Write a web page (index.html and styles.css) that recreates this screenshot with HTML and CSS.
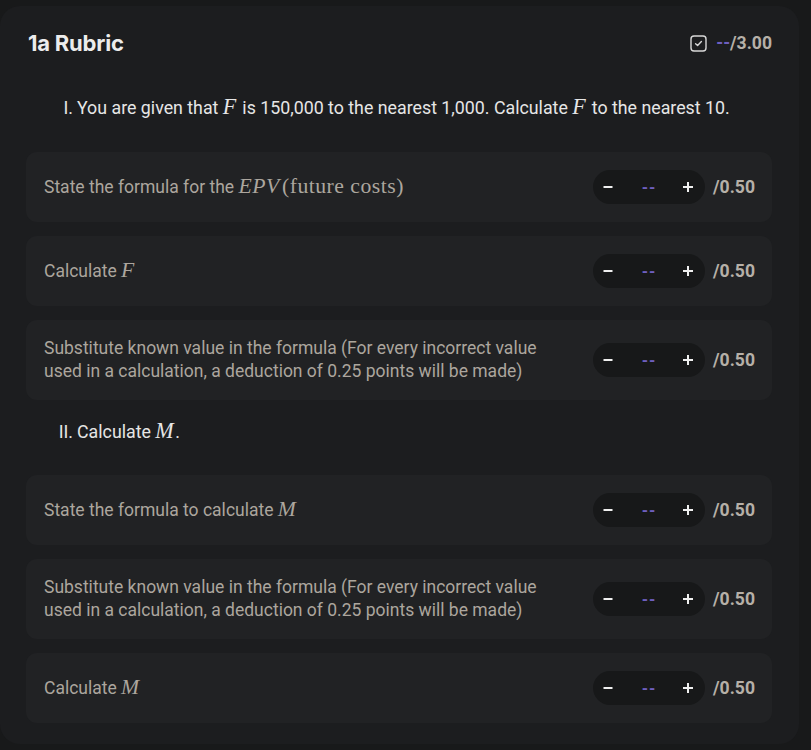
FILE: index.html
```html
<!DOCTYPE html>
<html>
<head>
<meta charset="utf-8">
<link rel="stylesheet" href="styles.css">
</head>
<body>
<div class="card">
  <div class="header">
    <h1 class="title">1a Rubric</h1>
    <div class="total">
      <svg class="check" width="17" height="17" viewBox="0 0 17 17"><rect x="1" y="1" width="15" height="15" rx="3" fill="none" stroke="#d8d8d8" stroke-width="1.4"/><path d="M5.6 8.8 L7.6 10.6 L11.4 6.6" fill="none" stroke="#d8d8d8" stroke-width="1.4" stroke-linecap="round" stroke-linejoin="round"/></svg>
      <span class="dash">--</span><span class="max">/3.00</span>
    </div>
  </div>

  <div class="question q1"><span class="marker">I.</span><span class="qtext">You are given that <span class="mi">F</span> is 150,000 to the nearest 1,000. Calculate <span class="mi">F</span> to the nearest 10.</span></div>

  <div class="items">
    <div class="item">
      <div class="itext">State the formula for the <span class="mi">EPV</span><span class="mr">(future costs)</span></div>
      <div class="score">
        <div class="stepper"><span class="btn"><svg width="12" height="12" viewBox="0 0 12 12"><path d="M1.5 6H10.5" stroke="#f0f0f0" stroke-width="2"/></svg></span><span class="val">--</span><span class="btn"><svg width="12" height="12" viewBox="0 0 12 12"><path d="M1 6H11M6 1V11" stroke="#f0f0f0" stroke-width="2"/></svg></span></div>
        <span class="pts">/0.50</span>
      </div>
    </div>
    <div class="item">
      <div class="itext">Calculate <span class="mi">F</span></div>
      <div class="score">
        <div class="stepper"><span class="btn"><svg width="12" height="12" viewBox="0 0 12 12"><path d="M1.5 6H10.5" stroke="#f0f0f0" stroke-width="2"/></svg></span><span class="val">--</span><span class="btn"><svg width="12" height="12" viewBox="0 0 12 12"><path d="M1 6H11M6 1V11" stroke="#f0f0f0" stroke-width="2"/></svg></span></div>
        <span class="pts">/0.50</span>
      </div>
    </div>
    <div class="item">
      <div class="itext long">Substitute known value in the formula (For every incorrect value used in a calculation, a deduction of 0.25 points will be made)</div>
      <div class="score">
        <div class="stepper"><span class="btn"><svg width="12" height="12" viewBox="0 0 12 12"><path d="M1.5 6H10.5" stroke="#f0f0f0" stroke-width="2"/></svg></span><span class="val">--</span><span class="btn"><svg width="12" height="12" viewBox="0 0 12 12"><path d="M1 6H11M6 1V11" stroke="#f0f0f0" stroke-width="2"/></svg></span></div>
        <span class="pts">/0.50</span>
      </div>
    </div>
  </div>

  <div class="question q2"><span class="marker">II.</span><span class="qtext">Calculate <span class="mi">M</span>.</span></div>

  <div class="items">
    <div class="item">
      <div class="itext">State the formula to calculate <span class="mi">M</span></div>
      <div class="score">
        <div class="stepper"><span class="btn"><svg width="12" height="12" viewBox="0 0 12 12"><path d="M1.5 6H10.5" stroke="#f0f0f0" stroke-width="2"/></svg></span><span class="val">--</span><span class="btn"><svg width="12" height="12" viewBox="0 0 12 12"><path d="M1 6H11M6 1V11" stroke="#f0f0f0" stroke-width="2"/></svg></span></div>
        <span class="pts">/0.50</span>
      </div>
    </div>
    <div class="item">
      <div class="itext long">Substitute known value in the formula (For every incorrect value used in a calculation, a deduction of 0.25 points will be made)</div>
      <div class="score">
        <div class="stepper"><span class="btn"><svg width="12" height="12" viewBox="0 0 12 12"><path d="M1.5 6H10.5" stroke="#f0f0f0" stroke-width="2"/></svg></span><span class="val">--</span><span class="btn"><svg width="12" height="12" viewBox="0 0 12 12"><path d="M1 6H11M6 1V11" stroke="#f0f0f0" stroke-width="2"/></svg></span></div>
        <span class="pts">/0.50</span>
      </div>
    </div>
    <div class="item">
      <div class="itext">Calculate <span class="mi">M</span></div>
      <div class="score">
        <div class="stepper"><span class="btn"><svg width="12" height="12" viewBox="0 0 12 12"><path d="M1.5 6H10.5" stroke="#f0f0f0" stroke-width="2"/></svg></span><span class="val">--</span><span class="btn"><svg width="12" height="12" viewBox="0 0 12 12"><path d="M1 6H11M6 1V11" stroke="#f0f0f0" stroke-width="2"/></svg></span></div>
        <span class="pts">/0.50</span>
      </div>
    </div>
  </div>
</div>
</body>
</html>
```

FILE: styles.css
```css
* { box-sizing: border-box; }
html, body { margin: 0; padding: 0; }
body {
  background: #18191a;
  font-family: Roboto, "Liberation Sans", sans-serif;
  width: 811px;
  height: 750px;
  overflow: hidden;
  padding-top: 6px;
}
.card {
  width: 799px;
  background: #1c1d1f;
  border-radius: 20px;
  padding: 25px 27px 21px 26px;
}
.header {
  display: flex;
  justify-content: space-between;
  align-items: center;
  height: 24px;
}
.title {
  margin: 0 0 0 2px;
  font-family: Inter, "Noto Sans", sans-serif;
  font-size: 22px;
  font-weight: 700;
  color: #ececec;
  letter-spacing: -0.2px;
}
.total {
  display: flex;
  align-items: center;
  font-size: 17.6px;
  font-weight: 700;
}
.check { margin-right: 9px; }
.dash { color: #6e5fbf; }
.max { color: #b6b0a8; }
.question {
  display: flex;
  font-size: 17.8px;
  line-height: 24px;
  color: #e6e6e6;
}
.q1 { margin: 41px 0 32px; }
.q2 { margin: 20px 0 31px; }
.marker {
  width: 51px;
  text-align: right;
  padding-right: 4px;
  flex: none;
}
.mi {
  font-family: "Liberation Serif", "DejaVu Serif", serif;
  font-style: italic;
  font-size: 1.24em;
  letter-spacing: 0.6px;
  line-height: 1;
  padding-right: 1px;
}
.mr {
  font-family: "Liberation Serif", "DejaVu Serif", serif;
  font-size: 1.24em;
  letter-spacing: 0.5px;
  line-height: 1;
  margin-left: 1px;
}
.items {
  display: flex;
  flex-direction: column;
  gap: 14px;
}
.item {
  display: flex;
  align-items: center;
  justify-content: space-between;
  background: #212224;
  border-radius: 11px;
  padding: 16px 17px 16px 18px;
  min-height: 70px;
}
.itext {
  font-size: 17.5px;
  line-height: 24px;
  color: #aca69e;
}
.itext.long {
  line-height: 23px;
  max-width: 505px;
  padding: 1px 0;
}
.score {
  display: flex;
  align-items: center;
  gap: 8px;
  flex: none;
}
.stepper {
  display: grid;
  grid-template-columns: 30px 52px 30px;
  align-items: center;
  height: 34px;
  width: 112px;
  background: #171819;
  border-radius: 17px;
}
.btn {
  display: flex;
  justify-content: center;
  align-items: center;
}
.btn:last-child { padding-right: 4px; }
.val {
  text-align: center;
  color: #6e5fbf;
  font-size: 16px;
  font-weight: 700;
  letter-spacing: 1px;
}
.pts {
  font-size: 17.6px;
  font-weight: 700;
  color: #b6b0a8;
}
```
